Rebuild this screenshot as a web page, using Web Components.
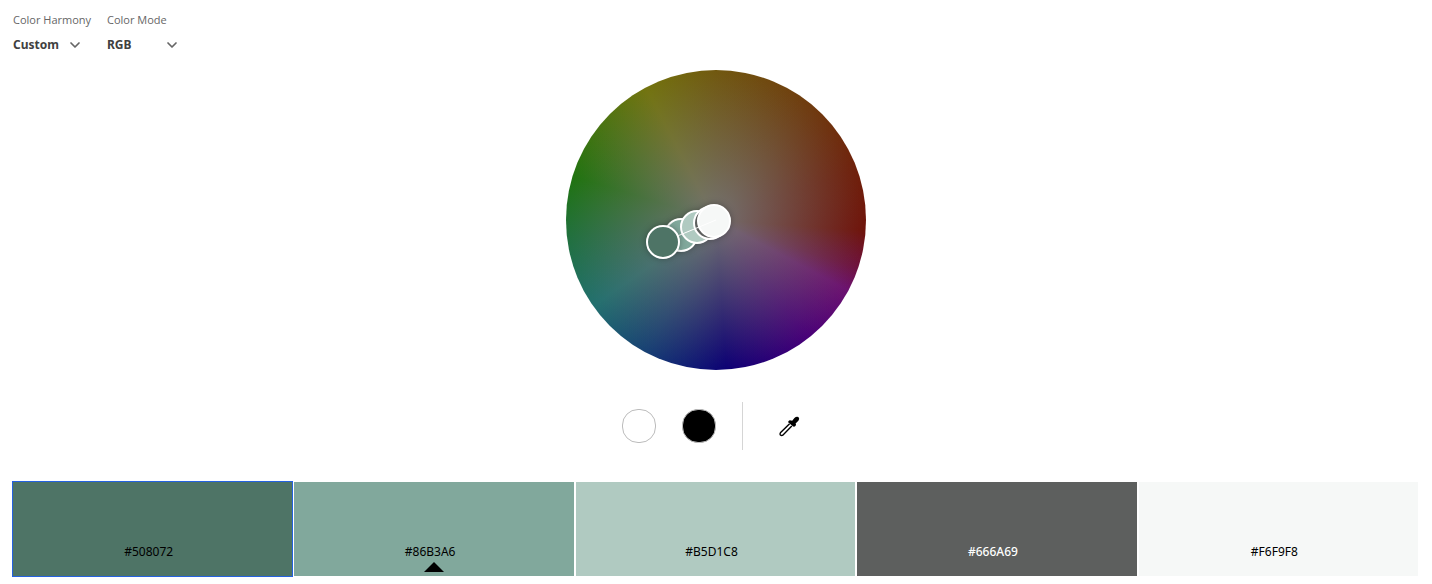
<!DOCTYPE html>
<html lang="en">
<head>
<meta charset="utf-8">
<title>Color wheel</title>
<style>
body { margin: 0; background: #fff; font-family: "Noto Sans", "Open Sans", sans-serif; color: #000; }
</style>
</head>
<body>
<color-editor></color-editor>
<script>
const define = (name, html, setup) => {
  const template = document.createElement('template');
  template.innerHTML = html;
  customElements.define(name, class extends HTMLElement {
    connectedCallback() {
      if (this.shadowRoot) return;
      this.attachShadow({ mode: 'open' }).append(template.content.cloneNode(true));
      if (setup) setup(this, this.shadowRoot);
    }
  });
};

define('option-picker', `
<style>
:host { display: block; width: 74px; }
label { display: block; font: 11px/16px "Open Sans", sans-serif; color: #666; white-space: nowrap; }
.box { display: grid; align-items: center; margin-top: 5px; width: var(--picker-width, 68px); }
select, svg { grid-area: 1 / 1; }
select { appearance: none; width: 100%; height: 24px; margin: 0; padding: 0; border: 0; background: none; font: bold 12px/24px "Noto Sans", sans-serif; color: #404040; }
svg { justify-self: end; width: 12px; height: 8px; pointer-events: none; }
</style>
<label for="choice"></label>
<div class="box">
  <select id="choice"></select>
  <svg viewBox="0 0 12 8" aria-hidden="true"><path d="M2 2l4 4 4-4" fill="none" stroke="#666" stroke-width="1.7" stroke-linecap="round" stroke-linejoin="round"/></svg>
</div>`, (host, root) => {
  root.querySelector('label').textContent = host.getAttribute('label');
  root.querySelector('select').add(new Option(host.getAttribute('value')));
});

define('color-wheel', `
<style>
:host { display: block; width: 300px; height: 300px; border-radius: 50%;
  background:
    radial-gradient(closest-side, rgb(115 113 112), rgb(115 113 112 / 0)),
    conic-gradient(#71580f 0deg, #6f3a0e 40deg, #6f200b 70deg, #6f130a 94deg, #6e1240 109deg, #6c1170 118deg, #480078 142deg, #0c0074 176deg, #0e0f74 184deg, #174074 208deg, #22706f 235deg, #207040 262deg, #20730f 287deg, #4a7412 310deg, #73740f 332deg, #71580f 360deg); }
svg { display: block; width: 100%; height: 100%; overflow: visible; }
.handle { stroke: #fff; stroke-width: 2; filter: drop-shadow(0 0 3px rgb(0 0 0 / .3)); }
</style>
<svg viewBox="0 0 300 300" role="img" aria-label="Color wheel">
  <g class="handle">
    <circle cx="115" cy="165" r="16" fill="#81a89c"/>
    <circle cx="131" cy="157" r="16" fill="#b0cac1"/>
    <circle cx="144" cy="153" r="16" fill="#5d5f5e"/>
    <circle cx="148" cy="151" r="16" fill="#f6f8f7"/>
  </g>
  <path d="M97 172L150 150" stroke="#fff" stroke-width="1"/>
  <circle class="handle" cx="97" cy="172" r="16" fill="#4e7466"/>
</svg>`);

define('wheel-tools', `
<style>
:host { display: flex; align-items: center; gap: 26px; height: 48px; }
button { box-sizing: border-box; width: 34px; height: 34px; padding: 0; margin: 0; border: 1px solid #bcbcbc; border-radius: 16px; background: #fff; }
.black { background: #000; }
.rule { width: 1px; height: 48px; background: #d5d5d5; }
.pick { width: 41px; border: 0; display: grid; place-items: center; }
svg { display: block; width: 22px; height: 22px; }
</style>
<button type="button" aria-label="White background"></button>
<button type="button" class="black" aria-label="Black background"></button>
<div class="rule"></div>
<button type="button" class="pick" aria-label="Eyedropper">
  <svg viewBox="0 0 22 22"><path d="M11.6 8.8L2.4 17.8Q1.6 19 2.4 20Q3.6 21 4.8 20.2L13.8 11" fill="none" stroke="#000" stroke-width="1.4"/><path d="M10.4 6.2Q11.6 4.8 13 5.6L14.2 5.8L16.4 3Q18.4 1 20.4 2Q22 3.8 20.4 5.8L17.6 8.4Q18.6 9.8 17.4 11Q16 12.2 14.8 11.2L11 8Q9.6 7.2 10.4 6.2Z"/></svg>
</button>`);

define('color-swatch', `
<style>
:host { display: block; flex: 1 1 0; min-width: 0; height: 94px; }
button { display: flex; flex-direction: column; align-items: center; justify-content: flex-end; box-sizing: border-box; width: 100%; height: 100%; margin: 0; padding: 0 0 4px; border: 0; border-radius: 0; background: var(--fill); color: var(--ink, #000); font: var(--weight, 400) 12px/20px "Noto Sans", sans-serif; }
:host([selected]) button { outline: 1px solid #2562e0; }
span { padding-right: 8px; }
svg { display: block; width: 20px; height: 10px; visibility: hidden; }
:host([base]) svg { visibility: visible; }
</style>
<button type="button"><span><slot></slot></span><svg viewBox="0 0 20 10" aria-hidden="true"><path d="M10 0L20 10H0Z"/></svg></button>`);

define('color-editor', `
<style>
:host { display: flex; flex-direction: column; align-items: center; padding: 12px 14px 8px 13px; }
header { align-self: stretch; display: flex; gap: 20px; }
color-wheel { margin-top: 13px; }
wheel-tools { margin-top: 32px; }
.swatches { align-self: stretch; display: flex; gap: 2px; margin-top: 32px; }
</style>
<header>
  <option-picker label="Color Harmony" value="Custom"></option-picker>
  <option-picker label="Color Mode" value="RGB" style="--picker-width:71px"></option-picker>
</header>
<color-wheel></color-wheel>
<wheel-tools></wheel-tools>
<div class="swatches">
  <color-swatch selected style="--fill:#4e7466">#508072</color-swatch>
  <color-swatch base style="--fill:#81a89c">#86B3A6</color-swatch>
  <color-swatch style="--fill:#b0cac1">#B5D1C8</color-swatch>
  <color-swatch style="--fill:#5d5f5e;--ink:#fff;--weight:500">#666A69</color-swatch>
  <color-swatch style="--fill:#f6f8f7">#F6F9F8</color-swatch>
</div>`);
</script>
</body>
</html>
